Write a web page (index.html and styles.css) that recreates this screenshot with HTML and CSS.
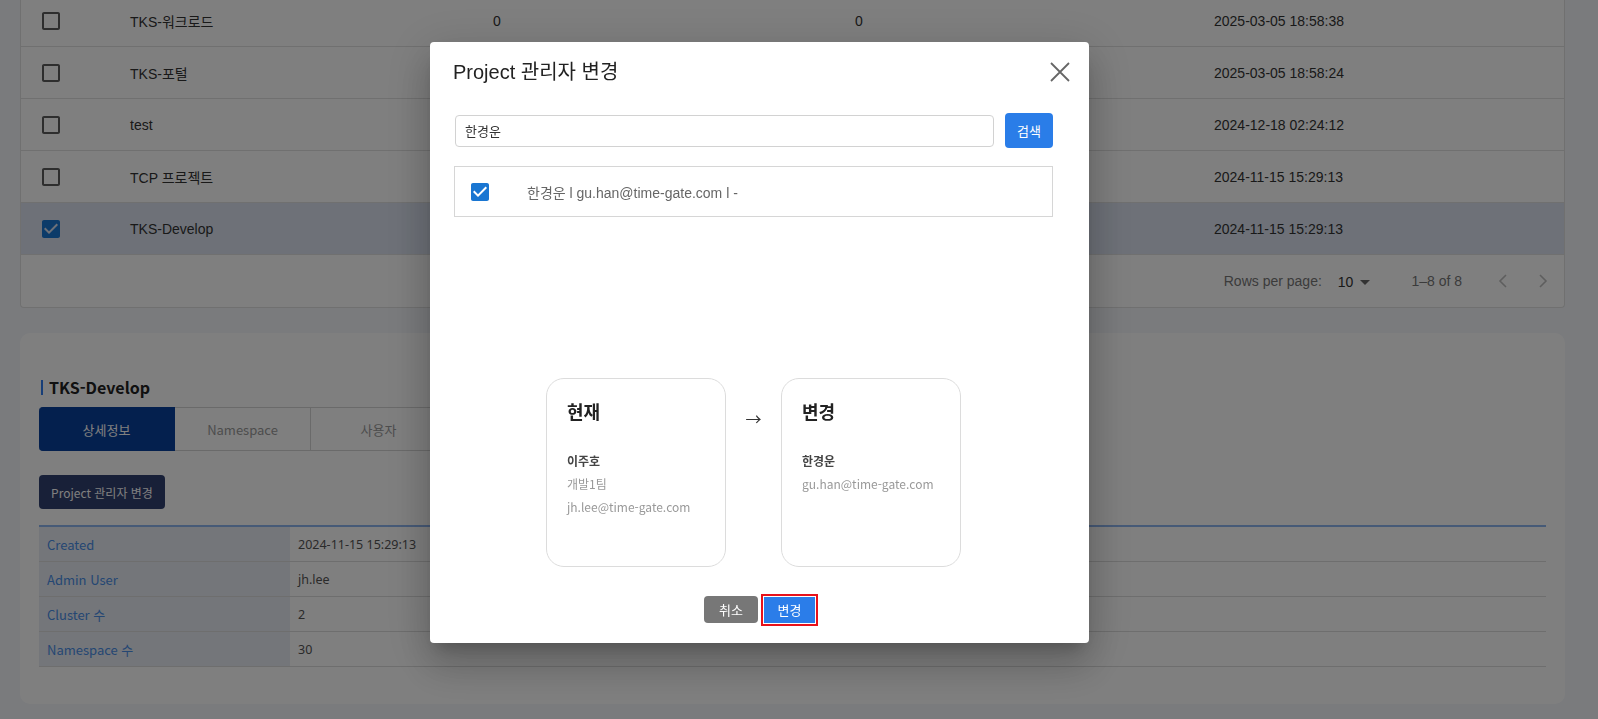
FILE: index.html
```html
<!DOCTYPE html>
<html lang="ko">
<head>
<meta charset="utf-8">
<title>Project 관리자 변경</title>
<link rel="stylesheet" href="styles.css">
</head>
<body>
<div class="page">
  <section class="list-card">
    <div class="row">
      <div class="cell cb"><svg class="cbx" viewBox="0 0 24 24"><path d="M19 5v14H5V5h14m0-2H5c-1.1 0-2 .9-2 2v14c0 1.1.9 2 2 2h14c1.1 0 2-.9 2-2V5c0-1.1-.9-2-2-2z"/></svg></div>
      <div class="cell">TKS-워크로드</div>
      <div class="cell">0</div>
      <div class="cell">0</div>
      <div class="cell">2025-03-05 18:58:38</div>
    </div>
    <div class="row">
      <div class="cell cb"><svg class="cbx" viewBox="0 0 24 24"><path d="M19 5v14H5V5h14m0-2H5c-1.1 0-2 .9-2 2v14c0 1.1.9 2 2 2h14c1.1 0 2-.9 2-2V5c0-1.1-.9-2-2-2z"/></svg></div>
      <div class="cell">TKS-포털</div>
      <div class="cell"></div>
      <div class="cell"></div>
      <div class="cell">2025-03-05 18:58:24</div>
    </div>
    <div class="row">
      <div class="cell cb"><svg class="cbx" viewBox="0 0 24 24"><path d="M19 5v14H5V5h14m0-2H5c-1.1 0-2 .9-2 2v14c0 1.1.9 2 2 2h14c1.1 0 2-.9 2-2V5c0-1.1-.9-2-2-2z"/></svg></div>
      <div class="cell">test</div>
      <div class="cell"></div>
      <div class="cell"></div>
      <div class="cell">2024-12-18 02:24:12</div>
    </div>
    <div class="row">
      <div class="cell cb"><svg class="cbx" viewBox="0 0 24 24"><path d="M19 5v14H5V5h14m0-2H5c-1.1 0-2 .9-2 2v14c0 1.1.9 2 2 2h14c1.1 0 2-.9 2-2V5c0-1.1-.9-2-2-2z"/></svg></div>
      <div class="cell">TCP 프로젝트</div>
      <div class="cell"></div>
      <div class="cell"></div>
      <div class="cell">2024-11-15 15:29:13</div>
    </div>
    <div class="row selected">
      <div class="cell cb"><svg class="cbx checked" viewBox="0 0 24 24"><path d="M19 3H5c-1.11 0-2 .9-2 2v14c0 1.1.89 2 2 2h14c1.11 0 2-.9 2-2V5c0-1.1-.89-2-2-2zm-9 14l-5-5 1.41-1.41L10 14.17l7.59-7.59L19 8l-9 9z"/></svg></div>
      <div class="cell">TKS-Develop</div>
      <div class="cell"></div>
      <div class="cell"></div>
      <div class="cell">2024-11-15 15:29:13</div>
    </div>
    <div class="pagination">
      <span class="rpp">Rows per page:</span>
      <span class="rpp-select">10<svg class="drop" viewBox="0 0 10 5"><path d="M0 0l5 5 5-5z"/></svg></span>
      <span class="range">1–8 of 8</span>
      <span class="nav"><svg viewBox="0 0 24 24"><path d="M15 6l-6 6 6 6"/></svg></span>
      <span class="nav"><svg viewBox="0 0 24 24"><path d="M9 6l6 6-6 6"/></svg></span>
    </div>
  </section>

  <section class="detail-card">
    <h2 class="detail-title"><span class="bar"></span>TKS-Develop</h2>
    <div class="tabs">
      <div class="tab active">상세정보</div>
      <div class="tab">Namespace</div>
      <div class="tab">사용자</div>
    </div>
    <button class="btn-admin">Project 관리자 변경</button>
    <div class="info-table">
      <div class="info-row"><div class="info-label">Created</div><div class="info-value">2024-11-15 15:29:13</div></div>
      <div class="info-row"><div class="info-label">Admin User</div><div class="info-value">jh.lee</div></div>
      <div class="info-row"><div class="info-label">Cluster 수</div><div class="info-value">2</div></div>
      <div class="info-row"><div class="info-label">Namespace 수</div><div class="info-value">30</div></div>
    </div>
  </section>
</div>

<div class="backdrop">
  <div class="modal">
    <div class="modal-header">
      <h3 class="modal-title">Project 관리자 변경</h3>
      <svg class="close" viewBox="0 0 20 20"><path d="M1 1L19 19M19 1L1 19"/></svg>
    </div>
    <div class="search-row">
      <input class="search-input" type="text" value="한경운">
      <button class="btn-search">검색</button>
    </div>
    <div class="result">
      <svg class="cbx checked modal-cbx" viewBox="0 0 24 24"><path d="M19 3H5c-1.11 0-2 .9-2 2v14c0 1.1.89 2 2 2h14c1.11 0 2-.9 2-2V5c0-1.1-.89-2-2-2zm-9 14l-5-5 1.41-1.41L10 14.17l7.59-7.59L19 8l-9 9z"/></svg>
      <span class="result-text">한경운 l gu.han@time-gate.com l -</span>
    </div>
    <div class="compare">
      <div class="user-card">
        <div class="uc-head">현재</div>
        <div class="uc-name">이주호</div>
        <div class="uc-sub">개발1팀</div>
        <div class="uc-sub">jh.lee@time-gate.com</div>
      </div>
      <div class="arrow">→</div>
      <div class="user-card">
        <div class="uc-head">변경</div>
        <div class="uc-name">한경운</div>
        <div class="uc-sub">gu.han@time-gate.com</div>
      </div>
    </div>
    <div class="modal-footer">
      <button class="btn btn-cancel">취소</button>
      <button class="btn btn-confirm">변경</button>
    </div>
  </div>
</div>
</body>
</html>
```

FILE: styles.css
```css
html, body {
  margin: 0;
  height: 719px;
  overflow: hidden;
}
body {
  background: #f4f6fa;
  font-family: "Liberation Sans", "Noto Sans CJK KR", sans-serif;
  color: #333;
}
.page {
  padding: 0 33px 0 20px;
  margin-top: -5px;
}

/* list table */
.list-card {
  background: #fff;
  border: 1px solid #e0e0e0;
  border-top: none;
  border-radius: 0 0 4px 4px;
}
.row {
  display: grid;
  grid-template-columns: 109px 363px 362px 359px 1fr;
  align-items: center;
  height: 51px;
  border-bottom: 1px solid #e0e0e0;
  font-size: 14px;
  color: #333;
}
.row.selected { background: #dce3f1; }
.cb { padding-left: 18px; display: flex; }
.cbx { width: 24px; height: 24px; fill: #5c5c5c; display: block; }
.cbx.checked { fill: #1976d2; }

.pagination {
  display: flex;
  align-items: center;
  justify-content: flex-end;
  height: 52px;
  padding-right: 9px;
  font-size: 14px;
  color: #777;
}
.rpp-select {
  display: flex;
  align-items: center;
  margin-left: 16px;
  color: #333;
  font-size: 14px;
  padding-top: 2px;
}
.drop { width: 10px; height: 5px; margin-left: 7px; fill: #666; }
.range { margin-left: 41px; }
.nav {
  width: 24px;
  height: 24px;
  margin-left: 16px;
  display: flex;
  align-items: center;
  justify-content: center;
}
.range + .nav { margin-left: 29px; }
.nav svg { width: 24px; height: 24px; fill: none; stroke: #bdbdbd; stroke-width: 1.6; }

/* detail card */
.detail-card {
  margin-top: 25px;
  background: #fff;
  border-radius: 10px;
  padding: 43px 19px 37px;
  font-family: "Noto Sans CJK KR", sans-serif;
}
.detail-title {
  margin: 0;
  display: flex;
  align-items: center;
  height: 22px;
  font-size: 16px;
  font-weight: 700;
  color: #222;
}
.bar {
  width: 2px;
  height: 15px;
  background: #2f7cf0;
  margin: 0 6px 0 2px;
}
.tabs {
  margin-top: 9px;
  display: flex;
}
.tab {
  width: 136px;
  height: 44px;
  box-sizing: border-box;
  border: 1px solid #d5d5d5;
  border-left: none;
  display: flex;
  align-items: center;
  justify-content: center;
  font-size: 13px;
  color: #9a9a9a;
}
.tab.active {
  background: #09419c;
  border-color: #09419c;
  color: #fff;
  border-radius: 4px 0 0 4px;
}
.btn-admin {
  display: block;
  margin-top: 24px;
  width: 126px;
  height: 34px;
  border: none;
  border-radius: 4px;
  background: #304070;
  color: #fff;
  font-family: "Noto Sans CJK KR", sans-serif;
  font-size: 12px;
  padding: 0;
}
.info-table {
  margin-top: 16px;
  border-top: 2px solid #8db4ee;
}
.info-row {
  display: grid;
  grid-template-columns: 251px 1fr;
  height: 34px;
  border-bottom: 1px solid #dcdcdc;
  font-size: 13px;
}
.info-label {
  background: #e8ecf5;
  color: #4a8ee6;
  padding-left: 8px;
  display: flex;
  align-items: center;
}
.info-value {
  color: #555;
  padding-left: 8px;
  display: flex;
  align-items: center;
  font-family: "Noto Sans", "Noto Sans CJK KR", sans-serif;
  font-size: 12.5px;
}

/* modal */
.backdrop {
  position: fixed;
  inset: 0;
  background: rgba(0, 0, 0, 0.5);
}
.modal {
  position: absolute;
  left: 430px;
  top: 42px;
  width: 659px;
  height: 601px;
  box-sizing: border-box;
  padding: 0 36px 0 24px;
  background: #fff;
  border-radius: 4px;
  box-shadow: 0 11px 15px -7px rgba(0,0,0,.2), 0 24px 38px 3px rgba(0,0,0,.14), 0 9px 46px 8px rgba(0,0,0,.12);
  display: flex;
  flex-direction: column;
}
.modal-header {
  margin-top: 18px;
  margin-right: -17px;
  height: 24px;
  display: flex;
  align-items: center;
  justify-content: space-between;
}
.modal-title {
  margin: 0 0 0 -1px;
  font-size: 20px;
  font-weight: 400;
  color: #222;
  line-height: 24px;
}
.close {
  width: 20px;
  height: 20px;
  stroke: #666;
  stroke-width: 1.8;
  fill: none;
}
.search-row {
  margin-top: 29px;
  display: flex;
  align-items: center;
  gap: 11px;
}
.search-input {
  flex: 1;
  width: 0;
  height: 32px;
  box-sizing: border-box;
  margin: 0 0 0 1px;
  border: 1px solid #d2d2d2;
  border-radius: 4px;
  padding: 0 9px;
  font-family: "Noto Sans CJK KR", sans-serif;
  font-size: 13px;
  color: #333;
  outline: none;
}
.btn-search {
  width: 48px;
  height: 35px;
  border: none;
  border-radius: 4px;
  background: #2a7de8;
  color: #fff;
  font-family: "Noto Sans CJK KR", sans-serif;
  font-size: 13px;
  padding: 0;
}
.result {
  margin-top: 18px;
  height: 51px;
  box-sizing: border-box;
  border: 1px solid #d6d6d6;
  display: flex;
  align-items: center;
  padding-left: 13px;
}
.modal-cbx { fill: #1b6fd0; }
.result-text {
  margin-left: 35px;
  font-size: 14px;
  color: #666;
}
.compare {
  margin-top: 161px;
  display: flex;
  justify-content: center;
  align-items: flex-start;
}
.user-card {
  width: 180px;
  height: 189px;
  box-sizing: border-box;
  border: 1px solid #dcdcdc;
  border-radius: 18px;
  padding: 20px 20px;
  font-family: "Noto Sans CJK KR", sans-serif;
}
.uc-head {
  font-size: 18px;
  font-weight: 700;
  line-height: 24px;
  color: #222;
}
.uc-name {
  margin-top: 26px;
  font-size: 12px;
  font-weight: 700;
  line-height: 23px;
  color: #444;
}
.uc-sub {
  font-size: 12px;
  line-height: 23px;
  color: #999;
}
.arrow {
  width: 55px;
  text-align: center;
  margin-top: 28px;
  font-family: "Noto Sans CJK KR", sans-serif;
  font-size: 16px;
  line-height: 24px;
  color: #333;
}
.modal-footer {
  margin: 29px -36px 0 -24px;
  display: flex;
  justify-content: center;
  align-items: center;
  gap: 6px;
}
.btn {
  border: none;
  color: #fff;
  font-family: "Noto Sans CJK KR", sans-serif;
  font-size: 13px;
  padding: 0;
}
.btn-cancel {
  width: 54px;
  height: 27px;
  border-radius: 4px;
  background: #777;
}
.btn-confirm {
  width: 51px;
  height: 26px;
  background: #2b7de9;
  outline: 2px solid #e8121b;
  outline-offset: 1px;
}
```
